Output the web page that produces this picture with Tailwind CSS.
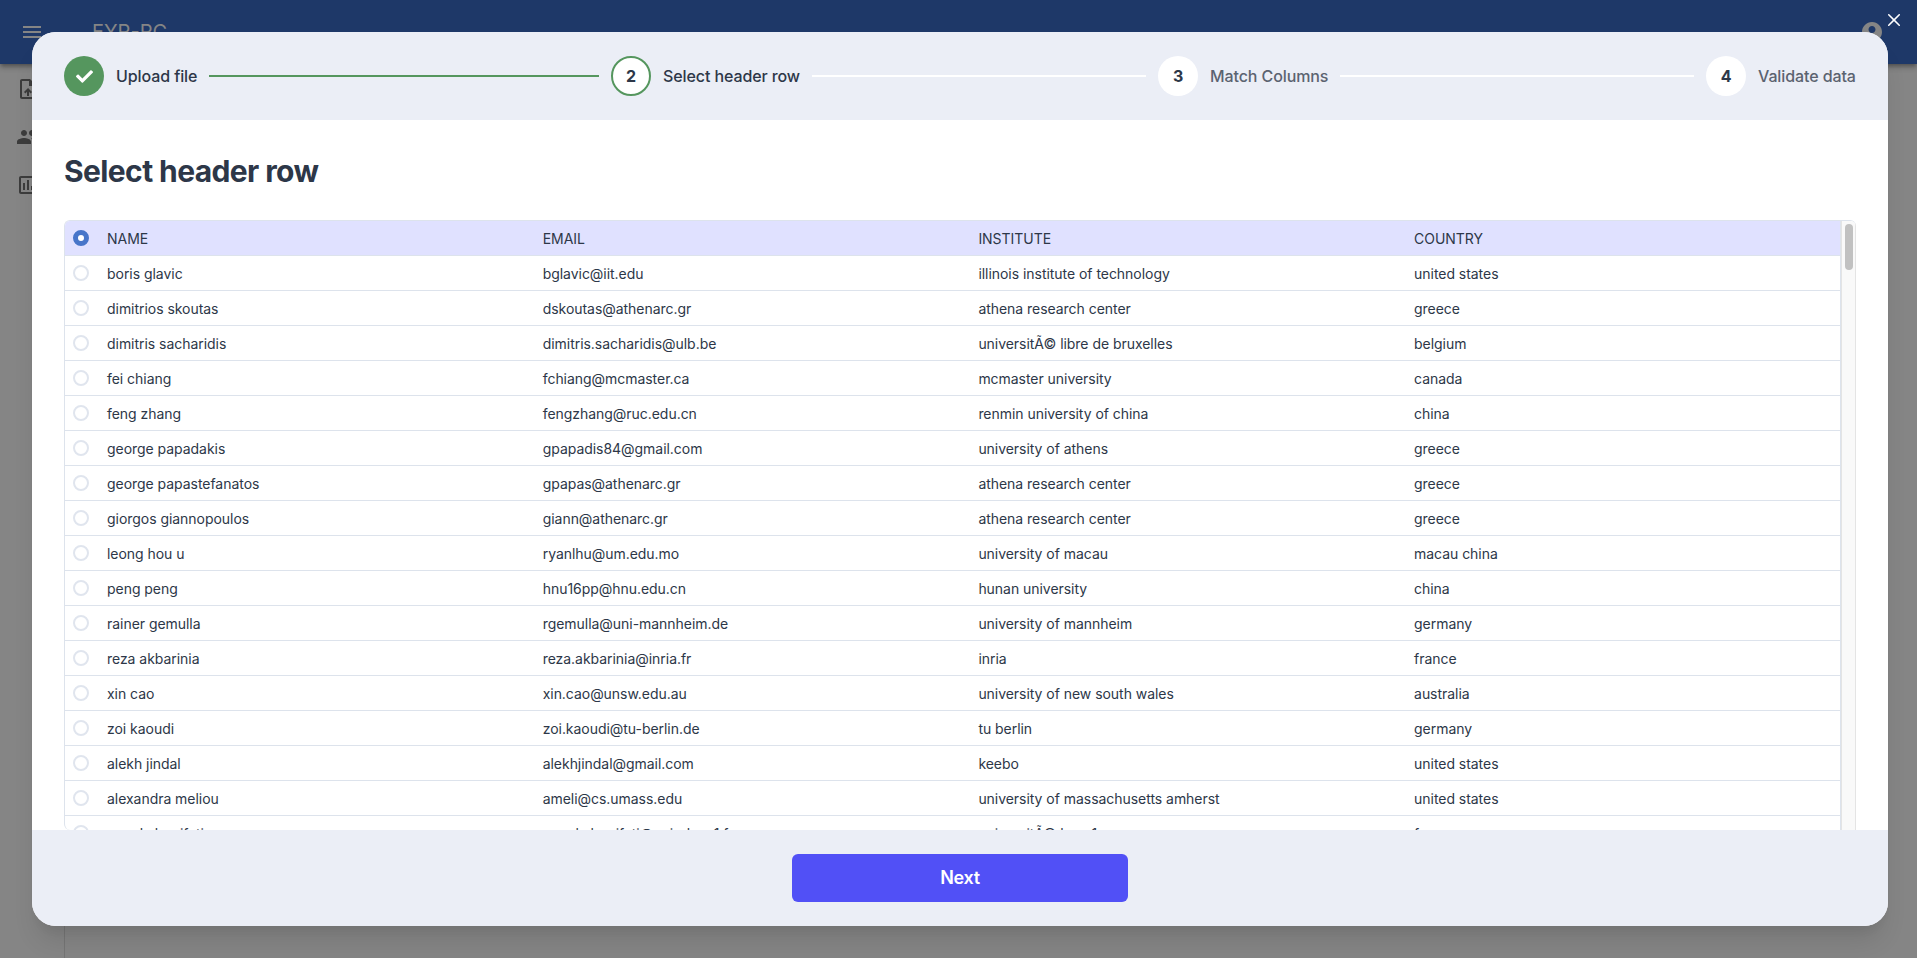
<!DOCTYPE html>
<html lang="en">
<head>
<meta charset="utf-8">
<title>Select header row</title>
<script src="https://cdn.jsdelivr.net/npm/@tailwindcss/browser@4"></script>
</head>
<body class="relative h-[958px] w-[1917px] overflow-hidden bg-[#858585] font-['Inter',sans-serif] text-[#2d3748]">
<!-- Dimmed application behind the dialog -->
<header class="relative z-10 flex h-16 items-start bg-[#1e3868] shadow-[0_2px_4px_-1px_rgba(0,0,0,.3),0_4px_5px_rgba(0,0,0,.2)]">
  <svg class="ml-5 mt-5 size-6 shrink-0 fill-[#858585]" viewBox="0 0 24 24"><path d="M3 18h18v-2H3v2zm0-5h18v-2H3v2zm0-7v2h18V6H3z"/></svg>
  <span class="ml-12 mt-4 text-[20px] leading-8 font-normal text-[#858585]">EYR-RC</span>
  <svg class="ml-auto mr-[33px] mt-5 size-6 shrink-0 fill-[#858585]" viewBox="0 0 24 24"><path d="M12 2C6.480 2 2 6.480 2 12s4.480 10 10 10 10-4.480 10-10S17.520 2 12 2zm0 4c1.930 0 3.500 1.570 3.500 3.500S13.930 13 12 13s-3.500-1.570-3.500-3.500S10.070 6 12 6zm0 14c-2.030 0-4.430-.820-6.140-2.880C7.550 15.800 9.680 15 12 15s4.450.800 6.140 2.120C16.430 19.180 14.030 20 12 20z"/></svg>
</header>
<nav class="flex h-[894px] w-[65px] flex-col gap-6 border-r border-[#757575] pl-4 pt-[13px]">
  <svg class="size-6 fill-[#3c3c3c]" viewBox="0 0 24 24"><path d="M14 2H6c-1.100 0-1.990.900-1.990 2L4 20c0 1.100.890 2 1.990 2H18c1.100 0 2-.900 2-2V8l-6-6zm4 18H6V4h7v5h5v11zM8 15.010l1.410 1.410L11 14.840V19h2v-4.160l1.590 1.590L16 15.010 12.010 11 8 15.010z"/></svg>
  <svg class="size-6 fill-[#3c3c3c]" viewBox="0 0 24 24"><path d="M16 11c1.660 0 2.990-1.340 2.990-3S17.660 5 16 5s-3 1.340-3 3 1.340 3 3 3zm-8 0c1.660 0 2.990-1.340 2.990-3S9.660 5 8 5 5 6.340 5 8s1.340 3 3 3zm0 2c-2.330 0-7 1.170-7 3.500V19h14v-2.500c0-2.330-4.670-3.500-7-3.500zm8 0c-.290 0-.620.020-.970.050 1.160.840 1.970 1.970 1.970 3.450V19h6v-2.500c0-2.330-4.670-3.500-7-3.500z"/></svg>
  <svg class="size-6 fill-[#3c3c3c]" viewBox="0 0 24 24"><path d="M9 17H7v-7h2v7zm4 0h-2V7h2v10zm4 0h-2v-4h2v4zm2 2H5V5h14v14zm0-16H5c-1.100 0-2 .900-2 2v14c0 1.100.900 2 2 2h14c1.100 0 2-.900 2-2V5c0-1.100-.900-2-2-2z"/></svg>
</nav>

<!-- Dialog -->
<main class="absolute left-8 top-8 z-20 flex h-[894px] w-[1856px] flex-col overflow-hidden rounded-3xl bg-white shadow-[0_20px_25px_-5px_rgba(0,0,0,.1),0_10px_10px_-5px_rgba(0,0,0,.04)]">
  <ol class="flex h-[88px] shrink-0 items-center bg-[#ebeef6] px-8 text-base font-medium tracking-[-0.1px]">
    <li class="flex w-[547px] shrink-0 items-center gap-3 pr-3">
      <span class="flex size-10 items-center justify-center rounded-full bg-[#55965e]"><svg class="size-[17px] fill-white" viewBox="0 0 512 512"><path d="M173.898 439.404l-166.400-166.400c-9.997-9.997-9.997-26.206 0-36.204l36.203-36.204c9.997-9.998 26.207-9.998 36.204 0L192 312.690 432.095 72.596c9.997-9.997 26.207-9.997 36.204 0l36.203 36.204c9.997 9.997 9.997 26.206 0 36.204l-294.400 294.401c-9.998 9.997-26.207 9.997-36.204-.001z"/></svg></span>
      <span>Upload file</span><i class="h-0.5 flex-1 bg-[#55965e]"></i>
    </li>
    <li class="flex w-[547px] shrink-0 items-center gap-3 pr-3">
      <span class="flex size-10 items-center justify-center rounded-full border-2 border-[#55965e] bg-white font-bold">2</span>
      <span>Select header row</span><i class="h-0.5 flex-1 bg-white"></i>
    </li>
    <li class="flex w-[548px] shrink-0 items-center gap-3 pr-3">
      <span class="flex size-10 items-center justify-center rounded-full bg-white font-bold">3</span>
      <span class="text-[#5b6370]">Match Columns</span><i class="h-0.5 flex-1 bg-white"></i>
    </li>
    <li class="flex shrink-0 items-center gap-3">
      <span class="flex size-10 items-center justify-center rounded-full bg-white font-bold">4</span>
      <span class="whitespace-nowrap text-[#5b6370]">Validate data</span>
    </li>
  </ol>
  <section class="flex h-[710px] flex-col px-8 pt-8">
    <h1 class="mb-8 pt-0.5 text-[30px] leading-[34px] font-bold tracking-[-0.6px]">Select header row</h1>
    <div class="flex min-h-0 flex-1 overflow-hidden rounded-l-md rounded-tr-md border-l border-t border-[#dde3ec]">
      <div id="rows" class="w-[1776px] border-r border-[#dde3ec] text-sm tracking-[-0.04px]"></div>
      <div class="w-[15px] border-x border-[#e4e4e4] bg-[#f9f9f9] pl-[3px] pt-[3px]"><div class="h-[46px] w-2 rounded-full bg-[#c1c1c1]"></div></div>
    </div>
  </section>
  <footer class="flex h-24 shrink-0 items-center justify-center bg-[#ebeef6]">
    <button class="h-12 w-[336px] rounded-md bg-[#5150f6] text-lg font-semibold tracking-[-0.3px] text-white">Next</button>
  </footer>
</main>
<svg class="absolute right-[17px] top-[14px] z-30 size-3 fill-white" viewBox="0 0 24 24"><path d="M.439 21.440a1.500 1.500 0 0 0 2.122 2.121l9.262-9.261a.250.250 0 0 1 .354 0l9.262 9.263a1.500 1.500 0 1 0 2.122-2.121L14.300 12.177a.250.250 0 0 1 0-.354l9.263-9.262A1.500 1.500 0 0 0 21.439.440L12.177 9.700a.250.250 0 0 1-.354 0L2.561.440A1.500 1.500 0 0 0 .439 2.561L9.700 11.823a.250.250 0 0 1 0 .354z"/></svg>
<script>
const people = [
  ['NAME','EMAIL','INSTITUTE','COUNTRY'],
  ['boris glavic','bglavic@iit.edu','illinois institute of technology','united states'],
  ['dimitrios skoutas','dskoutas@athenarc.gr','athena research center','greece'],
  ['dimitris sacharidis','dimitris.sacharidis@ulb.be','universitÃ© libre de bruxelles','belgium'],
  ['fei chiang','fchiang@mcmaster.ca','mcmaster university','canada'],
  ['feng zhang','fengzhang@ruc.edu.cn','renmin university of china','china'],
  ['george papadakis','gpapadis84@gmail.com','university of athens','greece'],
  ['george papastefanatos','gpapas@athenarc.gr','athena research center','greece'],
  ['giorgos giannopoulos','giann@athenarc.gr','athena research center','greece'],
  ['leong hou u','ryanlhu@um.edu.mo','university of macau','macau china'],
  ['peng peng','hnu16pp@hnu.edu.cn','hunan university','china'],
  ['rainer gemulla','rgemulla@uni-mannheim.de','university of mannheim','germany'],
  ['reza akbarinia','reza.akbarinia@inria.fr','inria','france'],
  ['xin cao','xin.cao@unsw.edu.au','university of new south wales','australia'],
  ['zoi kaoudi','zoi.kaoudi@tu-berlin.de','tu berlin','germany'],
  ['alekh jindal','alekhjindal@gmail.com','keebo','united states'],
  ['alexandra meliou','ameli@cs.umass.edu','university of massachusetts amherst','united states'],
  ['angela bonifati','angela.bonifati@univ-lyon1.fr','universitÃ© lyon 1','france']
];
document.getElementById('rows').innerHTML = people.map((p, i) =>
  `<div class="grid h-[35px] grid-cols-[34px_repeat(4,435.7px)] items-center border-b border-[#dde3ec] ${i ? '' : 'bg-[#e0e1ff]'}">
    <span class="ml-2 size-4 rounded-full ${i ? 'border-2 border-[#e0e5ee]' : 'border-[5px] border-[#4775c9] bg-white'}"></span>
    ${p.map(t => `<span class="px-2 pt-0.5 leading-8">${t}</span>`).join('')}
  </div>`).join('');
</script>
</body>
</html>
